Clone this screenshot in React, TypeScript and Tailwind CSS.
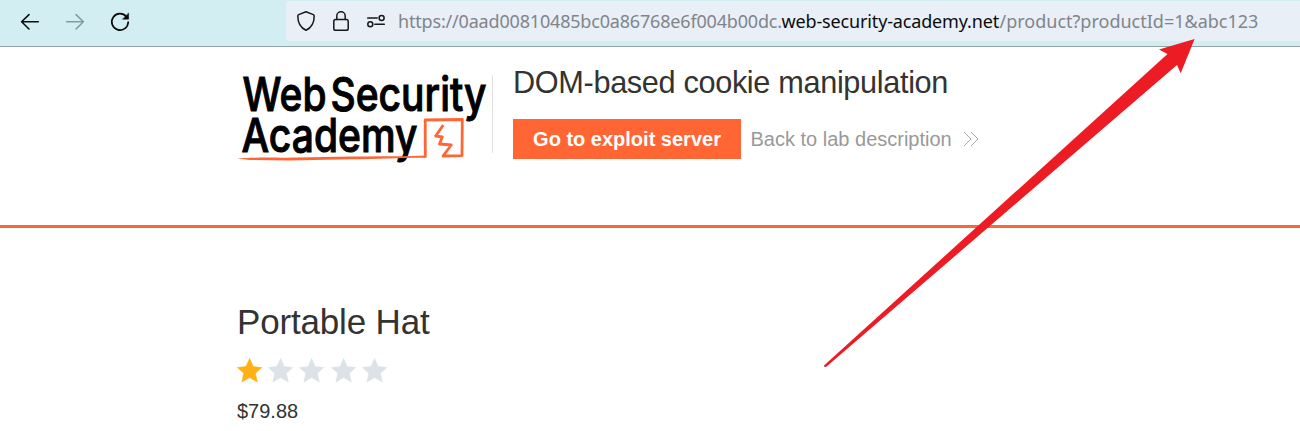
import React from "react";

const STAR = "M12.5 0.5L16.1 8.6L24.7 9.6L18.3 15.2L20.2 24L12.5 19.6L4.8 24L6.7 15.2L0.3 9.6L8.9 8.6Z";

function Toolbar() {
  return (
    <header className="flex h-[47px] items-start border-b border-[#91a3a7] bg-[#d2eef2]">
      <div className="flex h-11 w-[286px] shrink-0 items-center">
        <svg width="286" height="44" viewBox="0 0 286 44" fill="none" strokeLinecap="round" strokeLinejoin="round">
          <path d="M38.3 21.8H21.8M29 14.6L21.6 21.8L29 29" stroke="#0c0c0d" strokeWidth="1.6" />
          <path d="M66.6 21.8H83.2M76 14.6L83.4 21.8L76 29" stroke="#86999d" strokeWidth="1.5" />
          <path d="M126.3 16.6A8.2 8.2 0 1 0 128.2 22.2" stroke="#0c0c0d" strokeWidth="1.7" />
          <path d="M128.6 13.3V19.2H122.8Z" fill="#0c0c0d" stroke="#0c0c0d" strokeWidth="0.5" />
        </svg>
      </div>
      <div className="mt-px flex h-10 flex-1 items-center rounded-l-[4px] bg-[#e9eff6]">
        <svg className="shrink-0" width="112" height="40" viewBox="286 1 112 40" fill="none" stroke="#16191c" strokeWidth="1.5" strokeLinecap="round" strokeLinejoin="round">
          <path d="M306 11.7L313.3 14.6Q314.2 15 314.2 16C314.2 22.5 311.6 27.7 306 30.3C300.4 27.7 297.8 22.5 297.8 16Q297.8 15 298.7 14.6Z" />
          <rect x="333.8" y="19.6" width="14.4" height="10.7" rx="1.8" />
          <path d="M336.8 19.4V15.9a4.2 4.2 0 0 1 8.4 0v3.5" />
          <path d="M367.7 18H377.2M374.8 24.2H384.3" />
          <circle cx="381.6" cy="18" r="2.5" />
          <circle cx="370.3" cy="24.2" r="2.5" />
        </svg>
        <p className="flex whitespace-pre font-['Noto_Sans',sans-serif] text-[18px] leading-10 text-[#80858a]">
          <span className="w-[383.5px] tracking-[-0.18px]">https://0aad00810485bc0a86768e6f004b00dc.</span>
          <span className="w-[218px] tracking-[-0.15px] text-[#0c0c0d]">web-security-academy.net</span>
          <span>/product?productId=1&amp;abc123</span>
        </p>
      </div>
    </header>
  );
}

function Logo() {
  return (
    <svg width="255" height="100" viewBox="237 70 255 100" className="shrink-0" aria-label="Web Security Academy">
      <g fill="#000" fontFamily="Inter, sans-serif" fontSize="46.5" fontWeight="500" stroke="#000" strokeWidth="1">
        <text x="242.5" y="110.7" textLength="84" lengthAdjust="spacingAndGlyphs">Web</text>
        <text x="330.5" y="110.7" textLength="156" lengthAdjust="spacingAndGlyphs">Security</text>
        <text x="241.5" y="151.7" textLength="176" lengthAdjust="spacingAndGlyphs">Academy</text>
      </g>
      <g fill="none" stroke="#ff6633" strokeLinejoin="round">
        <path d="M425.3 157.5L425.2 120L462.3 119.5L462 155.6L443 156L451.3 145L439.5 144L442.3 137L435.7 136L443.3 125" strokeWidth="2.8" />
      </g>
      <path d="M237 158.6C250 157.3 270 157.5 285 157.8C320 157.3 370 156 404 156.3L426 155.4L426 157.8C405 157.5 380 159.2 350 159.2L290 160.5L250 160Z" fill="#ff6633" />
    </svg>
  );
}

function LabHeader() {
  return (
    <section className="flex h-[181px] border-b-[3px] border-[#f9683c] pl-[237px] pt-[23px]">
      <Logo />
      <div className="mt-[5px] h-[78px] border-l border-[#e0e0e0] pl-[20px]">
        <h2 className="-mt-[10px] h-[54px] whitespace-nowrap text-[30.7px] leading-[35px] tracking-[-0.35px] text-[#333332]">DOM-based cookie manipulation</h2>
        <div className="flex h-10 items-center">
          <a className="flex h-10 w-[228px] items-center justify-center whitespace-nowrap bg-[#ff6633] text-[20px] font-bold text-white">Go to exploit server</a>
          <a className="ml-[9.5px] flex items-center whitespace-nowrap text-[20px] text-[#999]">
            Back to lab description
            <svg className="ml-[11px]" width="16" height="16" viewBox="0 0 16 16" fill="none" stroke="#aaa" strokeWidth="1">
              <path d="M1 1L8 8L1 15M8 1L15 8L8 15" />
            </svg>
          </a>
        </div>
      </div>
    </section>
  );
}

function Product() {
  return (
    <main className="pl-[237px] pt-[74px] text-[#333332]">
      <h1 className="text-[35px] leading-10 tracking-[-0.17px]">Portable Hat</h1>
      <div className="mt-4 flex gap-[6px]">
        {[1, 0, 0, 0, 0].map((on, i) => (
          <svg key={i} width="25.2" height="25" viewBox="0 0 25 25">
            <path d={STAR} fill={on ? "#ffb015" : "#dbe3e7"} stroke={on ? "#ffb015" : "#dbe3e7"} strokeWidth="0.6" strokeLinejoin="round" />
          </svg>
        ))}
      </div>
      <p className="mt-4 text-[20px] leading-6">$79.88</p>
    </main>
  );
}

export default function App() {
  return (
    <div className="relative h-[431px] w-[1300px] overflow-hidden bg-white font-['Liberation_Sans',Arial,sans-serif]">
      <Toolbar />
      <LabHeader />
      <Product />
      <svg className="pointer-events-none absolute left-0 top-0" width="1300" height="431">
        <path d="M1194.6 39L1159 49.4L1167.5 54L824 365.5Q824 367.5 826 367L1177 65L1180.7 73.3Z" fill="#ed1c24" />
      </svg>
    </div>
  );
}
